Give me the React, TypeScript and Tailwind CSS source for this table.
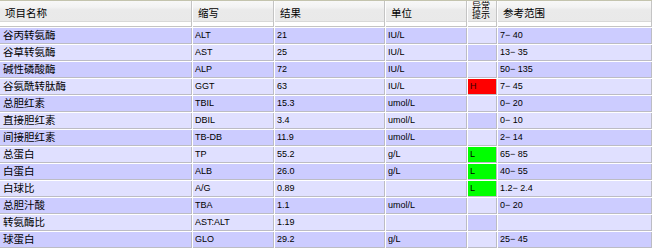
import React from "react";

type Row = {
  name: string;
  abbr: string;
  val: string;
  unit: string;
  flag: "" | "H" | "L";
  ref: string;
};

const rows: Row[] = [
  { name: "谷丙转氨酶", abbr: "ALT", val: "21", unit: "IU/L", flag: "", ref: "7\u2212 40" },
  { name: "谷草转氨酶", abbr: "AST", val: "25", unit: "IU/L", flag: "", ref: "13\u2212 35" },
  { name: "碱性磷酸酶", abbr: "ALP", val: "72", unit: "IU/L", flag: "", ref: "50\u2212 135" },
  { name: "谷氨酰转肽酶", abbr: "GGT", val: "63", unit: "IU/L", flag: "H", ref: "7\u2212 45" },
  { name: "总胆红素", abbr: "TBIL", val: "15.3", unit: "umol/L", flag: "", ref: "0\u2212 20" },
  { name: "直接胆红素", abbr: "DBIL", val: "3.4", unit: "umol/L", flag: "", ref: "0\u2212 10" },
  { name: "间接胆红素", abbr: "TB-DB", val: "11.9", unit: "umol/L", flag: "", ref: "2\u2212 14" },
  { name: "总蛋白", abbr: "TP", val: "55.2", unit: "g/L", flag: "L", ref: "65\u2212 85" },
  { name: "白蛋白", abbr: "ALB", val: "26.0", unit: "g/L", flag: "L", ref: "40\u2212 55" },
  { name: "白球比", abbr: "A/G", val: "0.89", unit: "", flag: "L", ref: "1.2\u2212 2.4" },
  { name: "总胆汁酸", abbr: "TBA", val: "1.1", unit: "umol/L", flag: "", ref: "0\u2212 20" },
  { name: "转氨酶比", abbr: "AST:ALT", val: "1.19", unit: "", flag: "", ref: "" },
  { name: "球蛋白", abbr: "GLO", val: "29.2", unit: "g/L", flag: "", ref: "25\u2212 45" },
];

const cjk = "font-['Liberation_Sans','Noto_Sans_CJK_SC',sans-serif]";
const headBg =
  "bg-[linear-gradient(to_bottom,#f8f8f8_0px,#f3f3f3_6px,#eaeaea_9px,#e9e9e9_20px,#d8d8d8_20px,#d8d8d8_21px,#ffffff_21px,#ffffff_25px)]";

function HeadCell({ w, children }: { w: string; children: React.ReactNode }) {
  return (
    <div
      className={`${w} h-[26px] shrink-0 flex items-center pl-[5px] border-b border-r border-[#c4c4c4] ${headBg} text-[10.5px] text-black ${cjk}`}
    >
      {children}
    </div>
  );
}

export default function App() {
  return (
    <div className="w-[654px] h-[252px] bg-white overflow-hidden">
      <div className="w-[652px] flex flex-col gap-px border-t border-[#c4c4ae] bg-white">
        <div className="flex gap-px">
          <HeadCell w="w-[192px]">项目名称</HeadCell>
          <HeadCell w="w-[81px]">缩写</HeadCell>
          <HeadCell w="w-[110px]">结果</HeadCell>
          <HeadCell w="w-[81px]">单位</HeadCell>
          <div
            className={`w-[29px] h-[26px] shrink-0 pl-[4px] pt-[1px] border-b border-r border-[#c4c4c4] ${headBg} text-[9px] leading-[9px] text-black ${cjk}`}
          >
            <div>异常</div>
            <div>提示</div>
          </div>
          <HeadCell w="w-[154px]">参考范围</HeadCell>
        </div>
        {rows.map((r, i) => {
          const dark = i % 2 === 0;
          const bg = dark ? "bg-[#ccccff]" : "bg-[#e0e0ff]";
          const inv = dark ? "bg-[#e0e0ff]" : "bg-[#ccccff]";
          const flagBg = r.flag === "H" ? "bg-[#ff0000]" : r.flag === "L" ? "bg-[#00ff00]" : inv;
          const cell = "h-[16px] shrink-0 flex items-center border-r border-b border-[#bcbcc4]";
          const latin = "text-[9px] font-['Liberation_Sans',sans-serif] pl-[2px]";
          return (
            <div key={i} className="flex gap-px">
              <div className={`${cell} w-[192px] ${bg} pl-[3px] text-[10.5px] text-black ${cjk}`}>{r.name}</div>
              <div className={`${cell} w-[81px] ${bg} ${latin} text-black`}>{r.abbr}</div>
              <div className={`${cell} w-[110px] ${bg} ${latin} text-black`}>{r.val}</div>
              <div className={`${cell} w-[81px] ${bg} ${latin} text-black`}>{r.unit}</div>
              <div className={`${cell} w-[29px] ${flagBg} ${latin} ${r.flag === "H" ? "text-[#3a0000]" : "text-black"}`}>
                {r.flag}
              </div>
              <div className={`${cell} w-[154px] ${bg} ${latin} text-black`}>{r.ref}</div>
            </div>
          );
        })}
      </div>
    </div>
  );
}
